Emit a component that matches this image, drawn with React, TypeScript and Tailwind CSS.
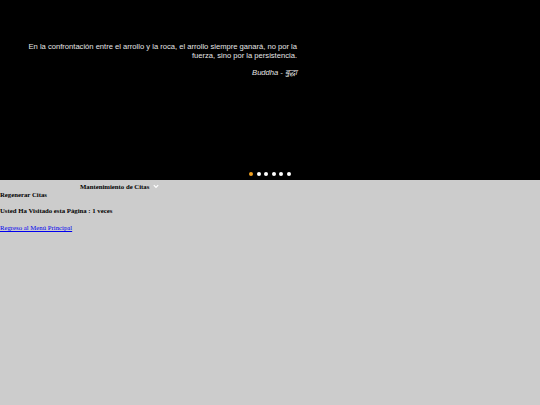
import React from "react";

export default function App() {
  const dots = [0, 1, 2, 3, 4, 5];
  return (
    <div className="min-h-[405px] w-[540px] bg-[#cccccc]" style={{ fontFamily: '"Liberation Serif", serif' }}>
      <div className="relative h-[180px] bg-black">
        <div
          className="absolute left-[25px] top-[42px] w-[272px] text-right text-[7.6px] leading-[9px] text-[#e6e6e6]"
          style={{ fontFamily: '"Liberation Sans", Arial, sans-serif' }}
        >
          <p>En la confrontación entre el arrollo y la roca, el arrollo siempre ganará, no por la fuerza, sino por la persistencia.</p>
          <p className="mt-[8px] italic">Buddha - बुद्धा</p>
        </div>
        <div className="absolute left-[249px] top-[172px] flex gap-[3.6px]">
          {dots.map((d) => (
            <span
              key={d}
              className={d === 0 ? "block h-[4px] w-[4px] rounded-full bg-[#f0a020]" : "block h-[4px] w-[4px] rounded-full bg-white"}
            />
          ))}
        </div>
      </div>
      <div className="text-[6.75px] font-bold leading-[8px] text-black">
        <div className="flex h-[11px] items-center pl-[80px] pt-[2px]">
          <span>Mantenimiento de Citas</span>
          <svg className="ml-[4px]" width="6" height="5" viewBox="0 0 6 5">
            <path d="M0.8 1.2 L3 3.4 L5.2 1.2" fill="none" stroke="#ffffff" strokeWidth="1.2" />
          </svg>
        </div>
        <p className="mt-[0px]">Regenerar Citas</p>
        <p className="mt-[8px]">Usted Ha Visitado esta Página : 1 veces</p>
        <p className="mt-[9px] font-normal">
          <a href="#" className="text-[#0000ee] underline">Regreso al Menú Principal</a>
        </p>
      </div>
    </div>
  );
}
